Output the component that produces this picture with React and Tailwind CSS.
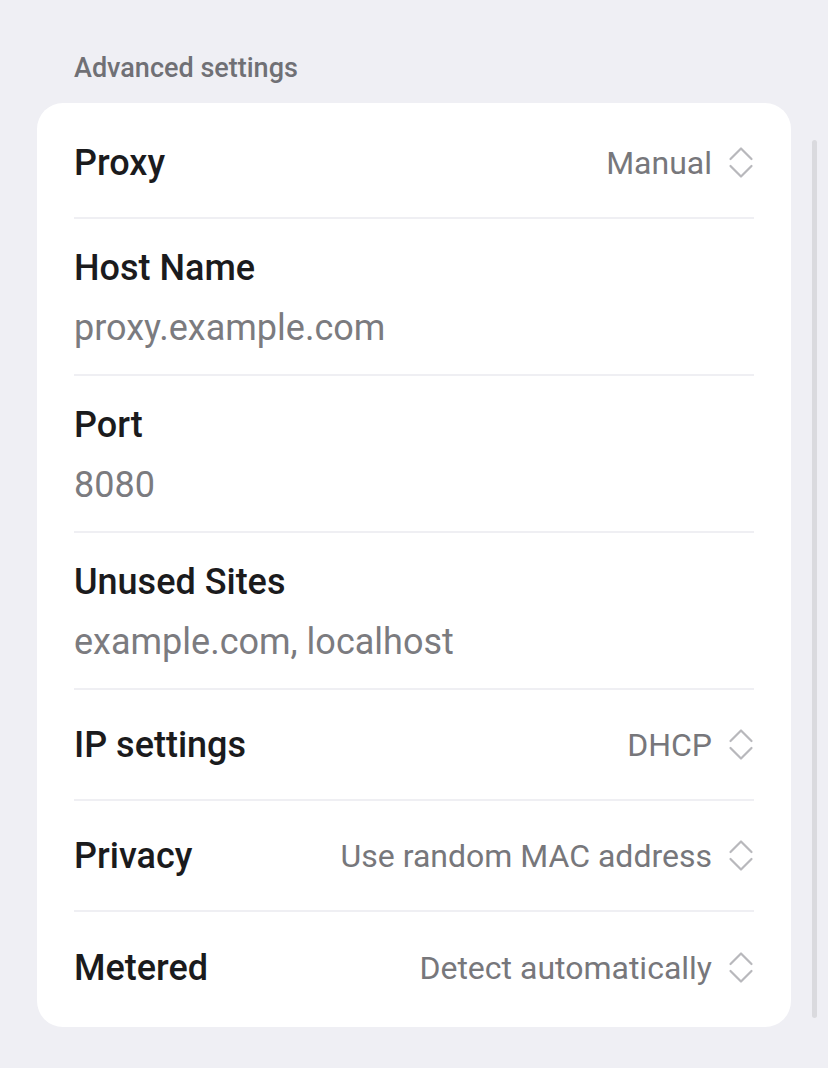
import React from "react";

function UpDown() {
  return (
    <svg width="26" height="34" viewBox="0 0 26 34" fill="none" className="shrink-0">
      <path d="M2.5 13 L13 2.5 L23.5 13" stroke="#b8b8bc" strokeWidth="2.2" strokeLinecap="round" strokeLinejoin="round" />
      <path d="M2.5 20 L13 30.5 L23.5 20" stroke="#b8b8bc" strokeWidth="2.2" strokeLinecap="round" strokeLinejoin="round" />
    </svg>
  );
}

function SelectRow({ title, value, last }) {
  return (
    <div className={"flex h-[111px] items-center justify-between " + (last ? "" : "border-b-2 border-[#efeff3]")}>
      <div className="text-[36px] font-medium leading-[40px] text-[#1b1b1d]">{title}</div>
      <div className="flex items-center gap-[16px]">
        <div className="text-[32px] leading-[40px] text-[#77777b]">{value}</div>
        <UpDown />
      </div>
    </div>
  );
}

function TextRow({ title, value }) {
  return (
    <div className="flex flex-col pt-[29px] pb-[26px] border-b-2 border-[#efeff3]">
      <div className="text-[36px] font-medium leading-[40px] text-[#1b1b1d]">{title}</div>
      <div className="mt-[20px] text-[36px] leading-[40px] text-[#7b7b7f]">{value}</div>
    </div>
  );
}

export default function App() {
  return (
    <div className="min-h-[1068px] w-[828px] bg-[#efeff4]" style={{ fontFamily: "Roboto, 'Noto Sans', sans-serif" }}>
      <div className="pt-[50px] pl-[74px] text-[27px] font-medium leading-[36px] text-[#707075]">Advanced settings</div>
      <div className="mt-[17px] flex">
        <div className="ml-[37px] w-[754px] rounded-[26px] bg-white px-[37px] pt-[5px] pb-[4px]">
          <SelectRow title="Proxy" value="Manual" />
          <TextRow title="Host Name" value="proxy.example.com" />
          <TextRow title="Port" value="8080" />
          <TextRow title="Unused Sites" value="example.com, localhost" />
          <SelectRow title="IP settings" value="DHCP" />
          <SelectRow title="Privacy" value="Use random MAC address" />
          <SelectRow title="Metered" value="Detect automatically" last />
        </div>
        <div className="ml-[21px] mt-[37px] h-[878px] w-[5px] rounded-full bg-[#dadade]" />
      </div>
    </div>
  );
}
